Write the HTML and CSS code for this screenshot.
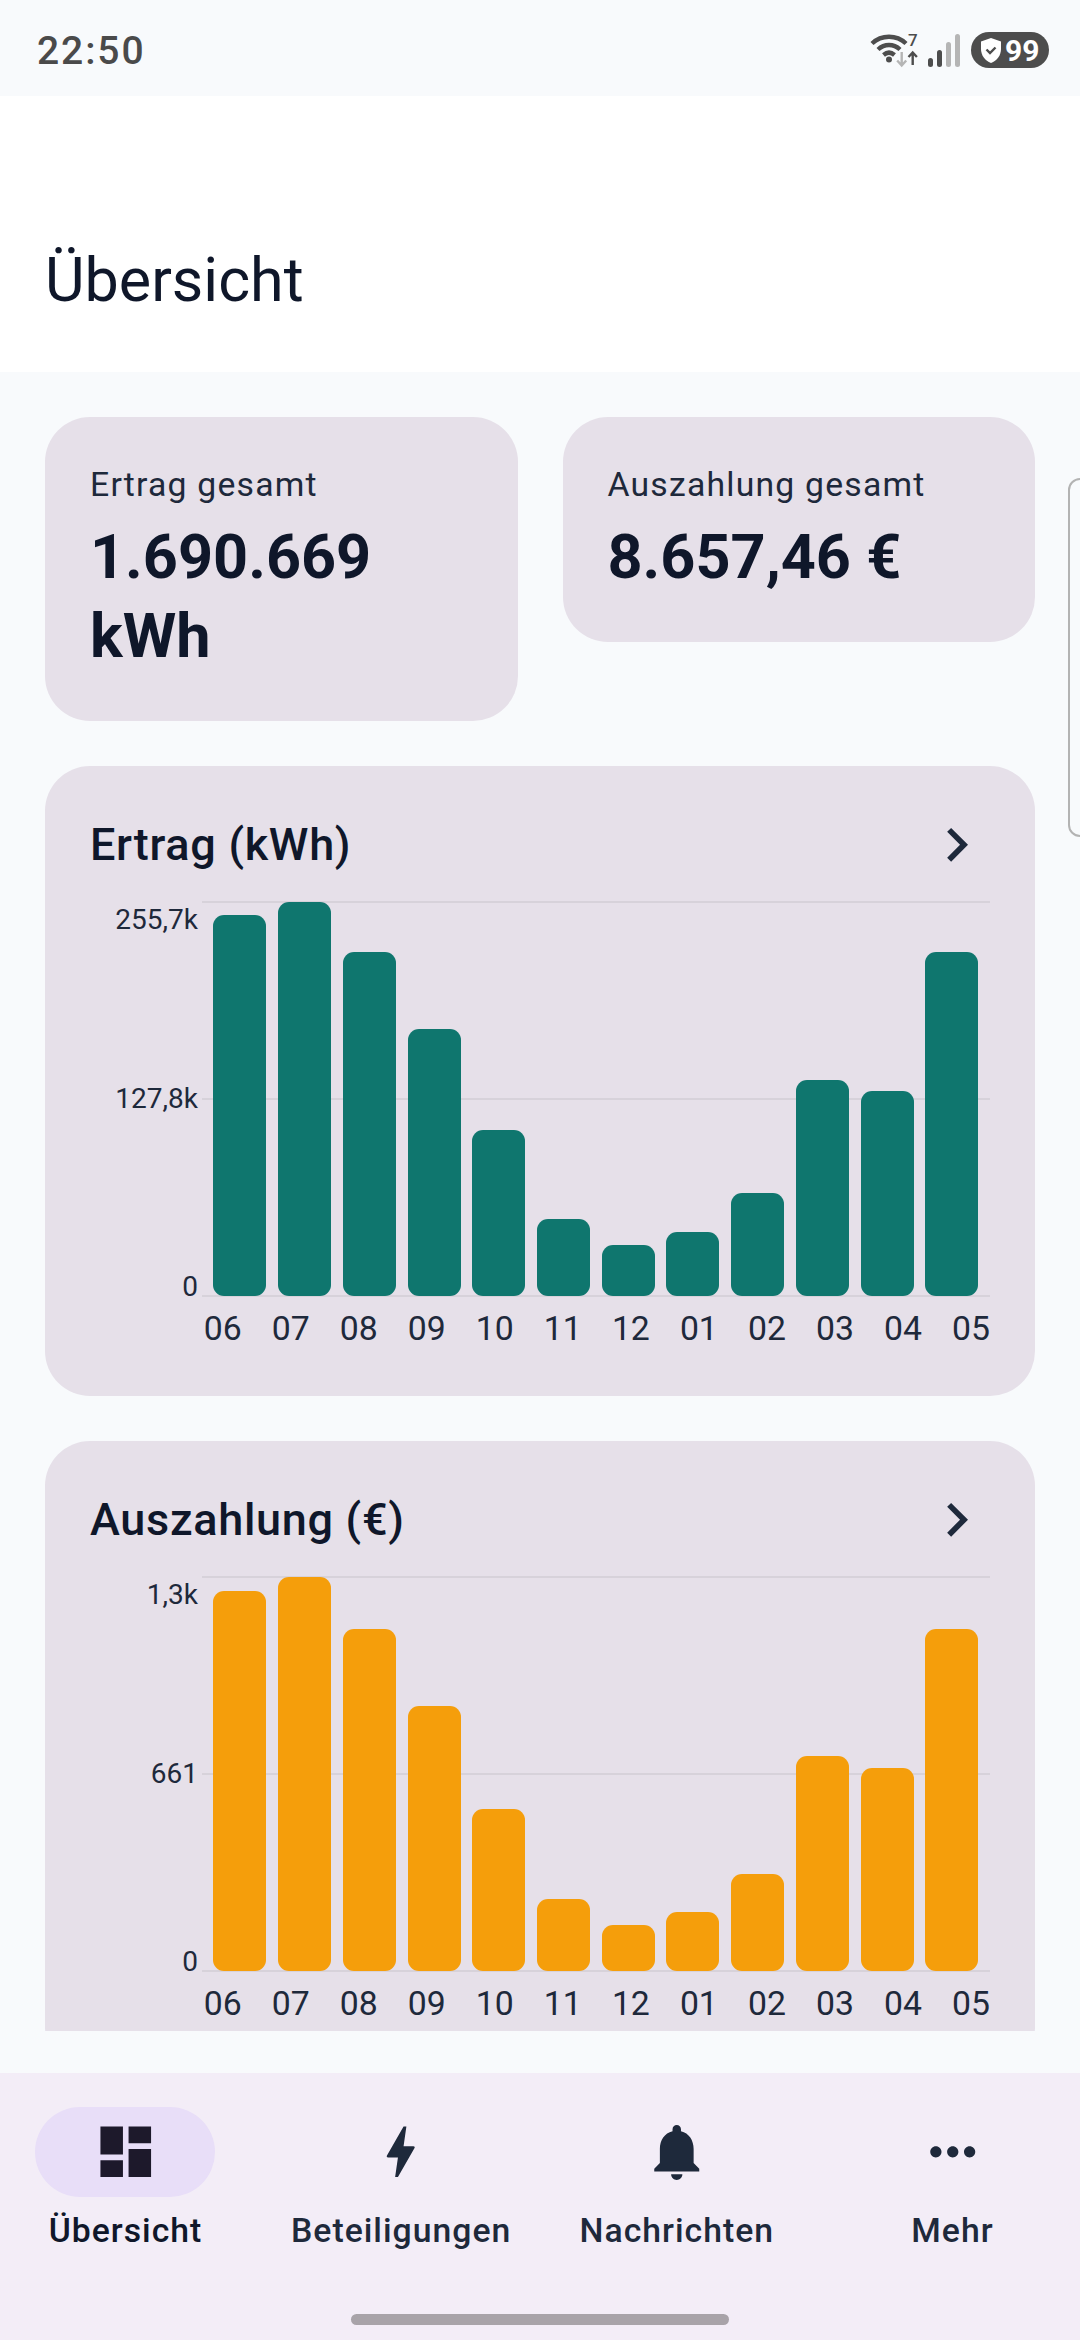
FILE: index.html
```html
<!DOCTYPE html>
<html lang="de">
<head>
    <meta charset="UTF-8">
    <title>Übersicht</title>
    <link rel="stylesheet" href="styles.css">
</head>
<body>
<div class="screen">
    <!-- status bar -->
    <div class="status-bar">
        <span class="status-time">22:50</span>
        <div class="status-icons">
            <svg class="status-wifi" width="52" height="40" viewBox="0 -2 52 40">
                <g fill="none" stroke="#4d4d4d" stroke-width="4.4">
                    <path d="M5 11.5C14.5 2.5 29.5 2.5 39 11.5"/>
                    <path d="M11 17.5C17.5 11.5 26.5 11.5 33 17.5"/>
                    <path d="M16.5 23C20 20 24 20 27.5 23"/>
                </g>
                <circle cx="22" cy="27.5" r="3" fill="#4d4d4d"/>
                <text x="41" y="14" class="wifi-seven">7</text>
                <path d="M34.7 20V33M30.2 28.5L34.7 33.5L39.2 28.5" fill="none" stroke="#b5b5b5" stroke-width="2.4"/>
                <path d="M45.7 33V20.5M41.5 25L45.7 20.5L49.9 25" fill="none" stroke="#4d4d4d" stroke-width="2.4"/>
            </svg>
            <div class="signal">
                <i class="signal-bar on signal-1"></i>
                <i class="signal-bar on signal-2"></i>
                <i class="signal-bar signal-3"></i>
                <i class="signal-bar signal-4"></i>
            </div>
            <div class="battery">
                <svg width="22" height="25" viewBox="0 0 22 25">
                    <path d="M11 0L21 3.5V11C21 17.5 17 22.5 11 25C5 22.5 1 17.5 1 11V3.5z" fill="#fff"/>
                    <path d="M6.5 11.5L10 15L15.5 9.5" fill="none" stroke="#4d4d4d" stroke-width="2.4"/>
                </svg>
                <span>99</span>
            </div>
        </div>
    </div>

    <!-- title -->
    <header class="page-header">
        <h1>Übersicht</h1>
    </header>

    <!-- content, cut off by the nav -->
    <main class="content">
        <div class="summary-row">
            <div class="card summary-card">
                <div class="summary-label">Ertrag gesamt</div>
                <div class="summary-value">1.690.669 kWh</div>
            </div>
            <div class="card summary-card">
                <div class="summary-label">Auszahlung gesamt</div>
                <div class="summary-value">8.657,46 €</div>
            </div>
        </div>

        <section class="card chart-card">
            <div class="chart-head">
                <h2>Ertrag (kWh)</h2>
                <svg class="chevron" viewBox="0 0 24 24"><path d="M10 6L8.59 7.41 13.17 12l-4.58 4.59L10 18l6-6z"/></svg>
            </div>
            <div class="chart-body">
                <div class="y-axis">
                    <span>255,7k</span>
                    <span>127,8k</span>
                    <span>0</span>
                </div>
                <div class="plot">
                    <div class="grid-lines"><i></i><i></i><i></i></div>
                    <div class="bars bars-teal">
                        <div class="bar" style="height:96.7%"></div>
                        <div class="bar" style="height:100%"></div>
                        <div class="bar" style="height:87.1%"></div>
                        <div class="bar" style="height:67.7%"></div>
                        <div class="bar" style="height:42%"></div>
                        <div class="bar" style="height:19.4%"></div>
                        <div class="bar" style="height:12.9%"></div>
                        <div class="bar" style="height:16.1%"></div>
                        <div class="bar" style="height:25.9%"></div>
                        <div class="bar" style="height:54.6%"></div>
                        <div class="bar" style="height:51.8%"></div>
                        <div class="bar" style="height:87.1%"></div>
                    </div>
                </div>
            </div>
            <div class="x-axis">
                <span>06</span><span>07</span><span>08</span><span>09</span><span>10</span><span>11</span>
                <span>12</span><span>01</span><span>02</span><span>03</span><span>04</span><span>05</span>
            </div>
        </section>

        <section class="card chart-card">
            <div class="chart-head">
                <h2>Auszahlung (€)</h2>
                <svg class="chevron" viewBox="0 0 24 24"><path d="M10 6L8.59 7.41 13.17 12l-4.58 4.59L10 18l6-6z"/></svg>
            </div>
            <div class="chart-body">
                <div class="y-axis">
                    <span>1,3k</span>
                    <span>661</span>
                    <span>0</span>
                </div>
                <div class="plot">
                    <div class="grid-lines"><i></i><i></i><i></i></div>
                    <div class="bars bars-orange">
                        <div class="bar" style="height:96.6%"></div>
                        <div class="bar" style="height:100%"></div>
                        <div class="bar" style="height:86.9%"></div>
                        <div class="bar" style="height:67.2%"></div>
                        <div class="bar" style="height:41.1%"></div>
                        <div class="bar" style="height:18.2%"></div>
                        <div class="bar" style="height:11.7%"></div>
                        <div class="bar" style="height:15%"></div>
                        <div class="bar" style="height:24.7%"></div>
                        <div class="bar" style="height:54.6%"></div>
                        <div class="bar" style="height:51.7%"></div>
                        <div class="bar" style="height:86.9%"></div>
                    </div>
                </div>
            </div>
            <div class="x-axis">
                <span>06</span><span>07</span><span>08</span><span>09</span><span>10</span><span>11</span>
                <span>12</span><span>01</span><span>02</span><span>03</span><span>04</span><span>05</span>
            </div>
        </section>
    </main>

    <!-- bottom navigation -->
    <nav class="bottom-nav">
        <div class="nav-items">
            <a class="nav-item">
                <span class="nav-icon active">
                    <svg viewBox="0 0 24 24"><path fill="#1d192b" d="M3 13h8V3H3v10zm0 8h8v-6H3v6zm10 0h8V11h-8v10zm0-18v6h8V3h-8z"/></svg>
                </span>
                <span class="nav-label">Übersicht</span>
            </a>
            <a class="nav-item">
                <span class="nav-icon">
                    <svg viewBox="0 0 24 24"><path d="M11 21h-1l1-7H7.5c-.4 0-.6-.3-.4-.7L13 3h1l-1 7h3.5c.4 0 .6.3.4.7L11 21z"/></svg>
                </span>
                <span class="nav-label">Beteiligungen</span>
            </a>
            <a class="nav-item">
                <span class="nav-icon">
                    <svg viewBox="0 0 24 24"><path d="M12 22c1.1 0 2-.9 2-2h-4c0 1.1.9 2 2 2zm6-6v-5c0-3.07-1.63-5.64-4.5-6.32V4c0-.83-.67-1.5-1.5-1.5s-1.5.67-1.5 1.5v.68C7.64 5.36 6 7.92 6 11v5l-2 2v1h16v-1l-2-2z"/></svg>
                </span>
                <span class="nav-label">Nachrichten</span>
            </a>
            <a class="nav-item">
                <span class="nav-icon">
                    <svg viewBox="0 0 24 24"><path d="M6 10c-1.1 0-2 .9-2 2s.9 2 2 2 2-.9 2-2-.9-2-2-2zm12 0c-1.1 0-2 .9-2 2s.9 2 2 2 2-.9 2-2-.9-2-2-2zm-6 0c-1.1 0-2 .9-2 2s.9 2 2 2 2-.9 2-2-.9-2-2-2z"/></svg>
                </span>
                <span class="nav-label">Mehr</span>
            </a>
        </div>
        <div class="home-handle"></div>
    </nav>

    <!-- outline peeking in at the right edge -->
    <div class="edge-handle"></div>
</div>
</body>
</html>
```

FILE: styles.css
```css
* {
    box-sizing: border-box;
}

body {
    margin: 0;
    font-family: Roboto, "Noto Sans", sans-serif;
    color: #0f172a;
}

.screen {
    position: relative;
    width: 1080px;
    height: 2340px;
    display: flex;
    flex-direction: column;
    background-color: #f8fafc;
    overflow: hidden;
}

/* status bar */
.status-bar {
    height: 96px;
    flex: none;
    display: flex;
    align-items: center;
    justify-content: space-between;
    padding: 4px 31px 0 37px;
}

.status-time {
    margin-top: 2px;
    font-size: 39px;
    font-weight: 500;
    letter-spacing: 1.9px;
    color: #4a4a4a;
}

.status-icons {
    display: flex;
    align-items: center;
}

.status-wifi {
    margin: 0 9px 0 0;
}

.wifi-seven {
    font-size: 17px;
    font-weight: 500;
    fill: #4d4d4d;
}

.signal {
    display: flex;
    align-items: flex-end;
    gap: 4px;
    height: 33px;
    margin-right: 11px;
}

.signal-bar {
    width: 5px;
    border-radius: 2.5px;
    background-color: #b5b5b5;
}

.signal-bar.on {
    background-color: #4d4d4d;
}

.signal-1 { height: 9px; }
.signal-2 { height: 17px; }
.signal-3 { height: 25px; }
.signal-4 { height: 33px; }

.battery {
    width: 78px;
    height: 36px;
    display: flex;
    align-items: center;
    gap: 3px;
    padding-left: 9px;
    border-radius: 18px;
    background-color: #4d4d4d;
    color: #fff;
    font-size: 30px;
    font-weight: 700;
}

/* title */
.page-header {
    height: 276px;
    flex: none;
    display: flex;
    align-items: flex-end;
    padding: 0 45px 52px;
    background-color: #fff;
}

.page-header h1 {
    margin: 0;
    font-size: 61px;
    font-weight: 400;
    line-height: 79px;
}

/* content */
.content {
    height: 1659px;
    flex: none;
    display: flex;
    flex-direction: column;
    gap: 45px;
    padding: 45px 45px 0;
    overflow: hidden;
}

.card {
    flex: none;
    padding: 45px;
    border-radius: 45px;
    background-color: #e6e0e9;
}

.summary-row {
    flex: none;
    display: grid;
    grid-template-columns: 1fr 1fr;
    gap: 45px;
    align-items: start;
}

.summary-label {
    font-size: 33.75px;
    line-height: 45px;
    letter-spacing: 1.2px;
    color: #1e293b;
}

.summary-value {
    margin-top: 11px;
    font-size: 61.2px;
    font-weight: 700;
    line-height: 78.75px;
}

.chart-head {
    height: 67.5px;
    display: flex;
    align-items: center;
    justify-content: space-between;
    margin-bottom: 22.5px;
}

.chart-head h2 {
    margin: 0;
    font-size: 45px;
    font-weight: 500;
    letter-spacing: 0.7px;
}

.chevron {
    width: 67.5px;
    height: 67.5px;
    fill: #1e293b;
}

.chart-body {
    display: flex;
    gap: 3.7px;
    height: 396px;
}

.y-axis {
    width: 108px;
    display: flex;
    flex-direction: column;
    justify-content: space-between;
    text-align: right;
    font-size: 28px;
    color: #1e293b;
}

.y-axis span {
    height: 38px;
    line-height: 38px;
}

/* the 0 sits on the baseline */
.y-axis span:last-child {
    line-height: 56px;
}

.plot {
    flex: 1;
    display: grid;
}

.plot > div {
    grid-area: 1 / 1;
}

.grid-lines {
    display: flex;
    flex-direction: column;
    justify-content: space-between;
}

.grid-lines i {
    display: block;
    height: 2px;
    background-color: #d7d2da;
}

.bars {
    display: flex;
    align-items: flex-end;
    gap: 11.7px;
    height: 394px;
    margin-top: 1px;
    padding: 0 11.7px;
}

.bar {
    flex: 1;
    border-radius: 11px;
}

.bars-teal .bar {
    background-color: #0f766e;
}

.bars-orange .bar {
    background-color: #f59e0b;
}

.x-axis {
    height: 54.7px;
    display: flex;
    justify-content: space-between;
    margin-left: 113.7px;
    padding-top: 9px;
    font-size: 33.75px;
    line-height: 45px;
    color: #1e293b;
}

/* bottom navigation */
.bottom-nav {
    flex: 1;
    margin-top: 42px;
    display: flex;
    flex-direction: column;
    align-items: center;
    padding-top: 33.75px;
    background-color: #f3edf7;
}

.nav-items {
    width: 100%;
    display: flex;
    gap: 24.7px;
    padding-right: 2px;
}

.nav-item {
    flex: 1;
    display: flex;
    flex-direction: column;
    align-items: center;
}

.nav-icon {
    width: 180px;
    height: 90px;
    display: flex;
    align-items: center;
    justify-content: center;
    border-radius: 45px;
}

.nav-icon.active {
    background-color: #e8def8;
}

.nav-icon svg {
    width: 67.5px;
    height: 67.5px;
    fill: #1e293b;
}

.nav-label {
    margin-top: 11px;
    font-size: 33.75px;
    font-weight: 500;
    line-height: 45px;
    letter-spacing: 1px;
    color: #1e293b;
}

.nav-item:first-child .nav-label {
    color: #0f172a;
}

.home-handle {
    width: 378px;
    height: 11px;
    margin-top: auto;
    margin-bottom: 15px;
    border-radius: 6px;
    background-color: #a8a3a9;
}

.edge-handle {
    position: absolute;
    top: 478px;
    left: 1068px;
    width: 30px;
    height: 359px;
    border: 2px solid #b3b3b3;
    border-radius: 12px;
}
```
